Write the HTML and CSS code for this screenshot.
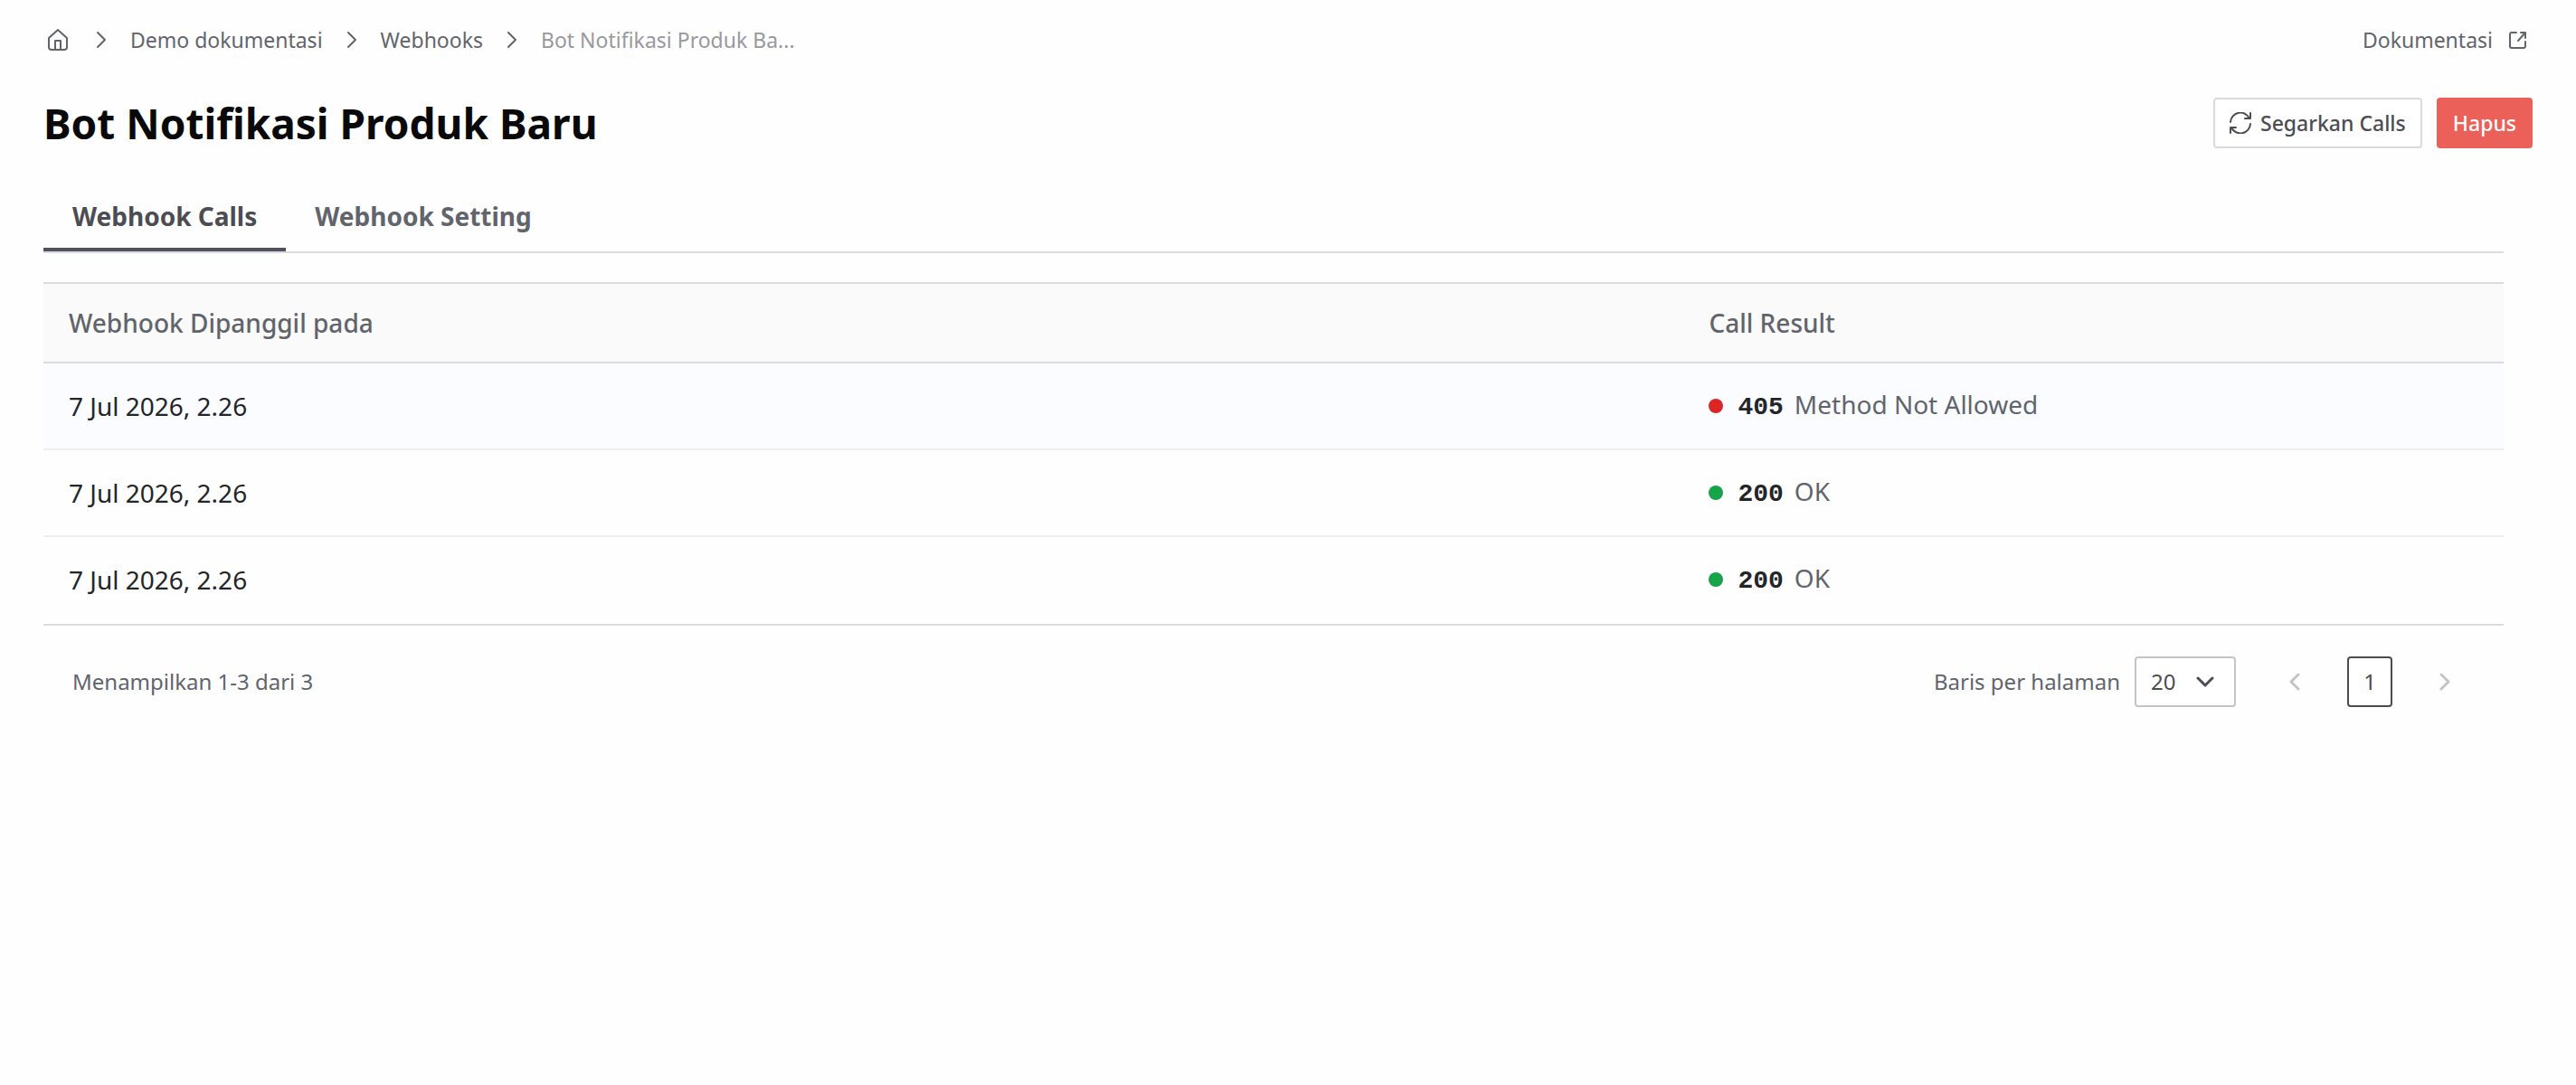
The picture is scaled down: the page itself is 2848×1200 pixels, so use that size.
FILE: index.html
```
<!DOCTYPE html>
<html lang="id">
<head>
    <meta charset="UTF-8">
    <meta name="viewport" content="width=device-width, initial-scale=1.0">
    <title>Bot Notifikasi Produk Baru</title>
    <link rel="stylesheet" href="styles.css">
</head>
<body>
    <!-- Breadcrumb and docs link -->
    <header class="topbar">
        <nav class="breadcrumb" aria-label="Breadcrumb">
            <a href="#" class="home" aria-label="Home">
                <svg width="24" height="26" viewBox="0 0 24 26" fill="none" stroke="currentColor" stroke-width="2" stroke-linejoin="round">
                    <path d="M2 11 12 2l10 9v10a3 3 0 0 1-3 3H5a3 3 0 0 1-3-3z"/>
                    <path d="M9 24V14h6v10"/>
                </svg>
            </a>
            <svg width="12" height="20" viewBox="0 0 12 20" fill="none" stroke="currentColor" stroke-width="2" stroke-linecap="round" stroke-linejoin="round"><path d="m2 2 8 8-8 8"/></svg>
            <a href="#">Demo dokumentasi</a>
            <svg width="12" height="20" viewBox="0 0 12 20" fill="none" stroke="currentColor" stroke-width="2" stroke-linecap="round" stroke-linejoin="round"><path d="m2 2 8 8-8 8"/></svg>
            <a href="#">Webhooks</a>
            <svg width="12" height="20" viewBox="0 0 12 20" fill="none" stroke="currentColor" stroke-width="2" stroke-linecap="round" stroke-linejoin="round"><path d="m2 2 8 8-8 8"/></svg>
            <span class="current">Bot Notifikasi Produk Ba...</span>
        </nav>
        <a href="#" class="docs">
            Dokumentasi
            <svg width="20" height="20" viewBox="0 0 20 20" fill="none" stroke="currentColor" stroke-width="2" stroke-linecap="round" stroke-linejoin="round">
                <path d="M8 2H3a2 2 0 0 0-2 2v13a2 2 0 0 0 2 2h13a2 2 0 0 0 2-2v-5"/>
                <path d="M13 2h5v6M18 2l-8 9"/>
            </svg>
        </a>
    </header>

    <main>
        <div class="heading">
            <h1>Bot Notifikasi Produk Baru</h1>
            <div class="actions">
                <button type="button" class="btn">
                    <svg width="24" height="24" viewBox="0 0 24 24" fill="none" stroke="currentColor" stroke-width="2" stroke-linecap="round" stroke-linejoin="round">
                        <path d="M1 11A11 11 0 0 1 22 7M23 1v6h-6"/>
                        <path d="M23 13A11 11 0 0 1 2 17M1 23v-6h6"/>
                    </svg>
                    Segarkan Calls
                </button>
                <button type="button" class="btn btn-danger">Hapus</button>
            </div>
        </div>

        <div class="content">
            <div class="tabs" role="tablist">
                <button type="button" class="tab active" role="tab" aria-selected="true">Webhook Calls</button>
                <button type="button" class="tab" role="tab" aria-selected="false">Webhook Setting</button>
            </div>

            <table class="calls">
                <thead>
                    <tr>
                        <th class="date">Webhook Dipanggil pada</th>
                        <th>Call Result</th>
                    </tr>
                </thead>
                <tbody>
                    <tr class="highlight">
                        <td>7 Jul 2026, 2.26</td>
                        <td><div class="result"><span class="dot error"></span><span class="code">405</span><span class="reason">Method Not Allowed</span></div></td>
                    </tr>
                    <tr>
                        <td>7 Jul 2026, 2.26</td>
                        <td><div class="result"><span class="dot"></span><span class="code">200</span><span class="reason">OK</span></div></td>
                    </tr>
                    <tr>
                        <td>7 Jul 2026, 2.26</td>
                        <td><div class="result"><span class="dot"></span><span class="code">200</span><span class="reason">OK</span></div></td>
                    </tr>
                </tbody>
            </table>

            <!-- Pagination -->
            <footer class="pagination">
                <span>Menampilkan 1-3 dari 3</span>
                <div class="pager">
                    <label for="rowsPerPage">Baris per halaman</label>
                    <div class="select">
                        <select id="rowsPerPage">
                            <option>10</option>
                            <option selected>20</option>
                            <option>50</option>
                        </select>
                        <svg width="20" height="12" viewBox="0 0 20 12" fill="none" stroke="currentColor" stroke-width="3" stroke-linecap="round" stroke-linejoin="round"><path d="m2 2 8 8 8-8"/></svg>
                    </div>
                    <div class="pages">
                        <button type="button" class="page" aria-label="Sebelumnya" disabled>
                            <svg width="12" height="20" viewBox="0 0 12 20" fill="none" stroke="currentColor" stroke-width="3" stroke-linecap="round" stroke-linejoin="round"><path d="m10 2-8 8 8 8"/></svg>
                        </button>
                        <button type="button" class="page active">1</button>
                        <button type="button" class="page" aria-label="Berikutnya" disabled>
                            <svg width="12" height="20" viewBox="0 0 12 20" fill="none" stroke="currentColor" stroke-width="3" stroke-linecap="round" stroke-linejoin="round"><path d="m2 2 8 8-8 8"/></svg>
                        </button>
                    </div>
                </div>
            </footer>
        </div>
    </main>
</body>
</html>
```
FILE: styles.css
```
* {
    box-sizing: border-box;
}

body {
    margin: 0;
    padding: 24px 48px;
    font-family: "Noto Sans", sans-serif;
    font-size: 24px;
    line-height: 40px;
    color: #62646c;
    background: #fefefe;
}

a {
    color: inherit;
    text-decoration: none;
}

svg {
    display: block;
    flex: none;
}

button,
select {
    font: inherit;
    color: inherit;
}

button {
    cursor: pointer;
}

/* Top bar */
.topbar {
    display: flex;
    justify-content: space-between;
    align-items: center;
    font-size: 23px;
}

.breadcrumb {
    display: flex;
    align-items: center;
    gap: 26px;
    padding-left: 4px;
}

.breadcrumb .home {
    margin-right: 4px;
}

.breadcrumb .current {
    color: #97999e;
}

.docs {
    display: flex;
    align-items: center;
    gap: 18px;
    padding-right: 6px;
}

/* Page heading */
.heading {
    display: flex;
    justify-content: space-between;
    align-items: center;
    margin-top: 40px;
}

h1 {
    margin: 0;
    font-size: 46px;
    line-height: 64px;
    font-weight: 700;
    color: #09090a;
}

.actions {
    display: flex;
    gap: 16px;
}

.btn {
    display: flex;
    align-items: center;
    gap: 10px;
    height: 56px;
    padding: 0 16px;
    border: 2px solid #dadada;
    border-radius: 4px;
    background: #fff;
    color: #4b4d53;
    font-size: 23px;
    font-weight: 500;
}

.btn-danger {
    border-color: #eb6058;
    background: #eb6058;
    color: #fff;
}

/* Tabs */
.content {
    margin-right: 32px;
}

.tabs {
    display: flex;
    margin-top: 32px;
    border-bottom: 2px solid #dadbdd;
}

.tab {
    padding: 22px 32px 18px;
    border: 0;
    border-bottom: 4px solid transparent;
    background: none;
    font-size: 28px;
    line-height: 34px;
    font-weight: 700;
}

.tab.active {
    border-bottom-color: #51525e;
    color: #4b4d53;
}

/* Table */
.calls {
    width: 100%;
    margin-top: 32px;
    border-collapse: separate;
    border-spacing: 0;
    border-top: 2px solid #dadbdd;
    border-bottom: 2px solid #dadbdd;
    font-size: 28px;
}

.calls th,
.calls td {
    padding: 0 28px;
    text-align: left;
}

.calls th {
    height: 88px;
    border-bottom: 2px solid #dadbdd;
    background: #fafafa;
    font-weight: 500;
}

.calls .date {
    width: 66.67%;
}

.calls td {
    height: 96px;
    border-bottom: 2px solid #eeeff1;
    color: #242528;
}

.calls tbody tr:last-child td {
    border-bottom-color: transparent;
}

.highlight {
    background: #fafcff;
}

.result {
    display: flex;
    align-items: baseline;
}

.dot {
    align-self: center;
    width: 16px;
    height: 16px;
    margin-right: 16px;
    border-radius: 50%;
    background: #16a34a;
}

.dot.error {
    background: #dc2626;
}

.code {
    margin-right: 12px;
    font-family: "Liberation Mono", monospace;
    font-weight: 700;
}

.reason {
    color: #62646c;
}

/* Pagination */
.pagination {
    display: flex;
    justify-content: space-between;
    align-items: center;
    padding: 34px 40px 34px 32px;
}

.pager,
.pages {
    display: flex;
    align-items: center;
}

.pager {
    gap: 16px;
}

.pages {
    gap: 33px;
    padding-left: 24px;
}

.select {
    display: grid;
    align-items: center;
    color: #4b4d53;
}

.select select,
.select svg {
    grid-area: 1 / 1;
}

.select select {
    width: 112px;
    height: 56px;
    padding: 0 16px;
    border: 2px solid #c4c4c7;
    border-radius: 4px;
    background: #fff;
    appearance: none;
}

.select svg {
    justify-self: end;
    margin-right: 24px;
    pointer-events: none;
}

.page {
    display: flex;
    align-items: center;
    justify-content: center;
    width: 50px;
    height: 56px;
    padding: 0;
    border: 2px solid transparent;
    border-radius: 4px;
    background: none;
}

.page:disabled {
    color: #c4c4c7;
    cursor: default;
}

.page.active {
    border-color: #4b4b50;
    background: #fff;
    color: #4b4d53;
}
```
